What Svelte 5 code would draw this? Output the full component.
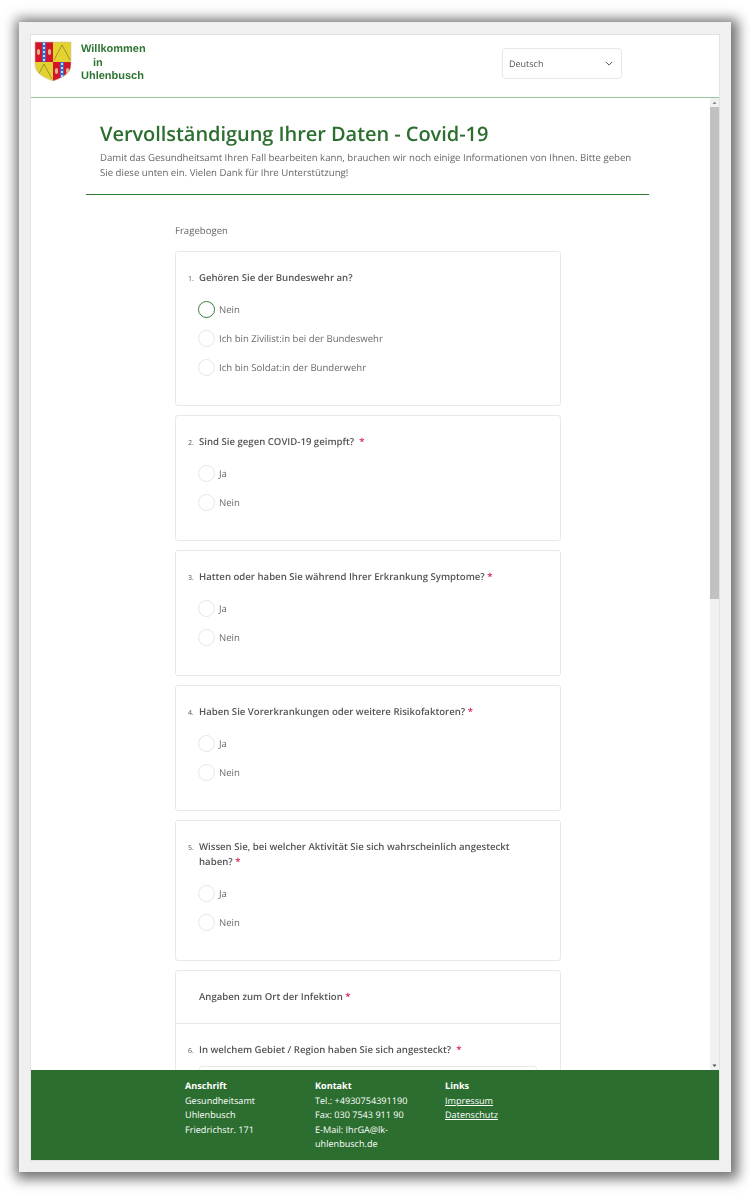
<script>
  const questions = [
    { n: 1, text: "Gehören Sie der Bundeswehr an?", options: ["Nein", "Ich bin Zivilist:in bei der Bundeswehr", "Ich bin Soldat:in der Bunderwehr"], checked: 0 },
    { n: 2, text: "Sind Sie gegen COVID-19 geimpft?", gap: true, options: ["Ja", "Nein"] },
    { n: 3, text: "Hatten oder haben Sie während Ihrer Erkrankung Symptome?", req: true, options: ["Ja", "Nein"] },
    { n: 4, text: "Haben Sie Vorerkrankungen oder weitere Risikofaktoren?", req: true, options: ["Ja", "Nein"] },
    { n: 5, text: "Wissen Sie, bei welcher Aktivität Sie sich wahrscheinlich angesteckt haben?", req: true, options: ["Ja", "Nein"] }
  ];
</script>

<div class="page">
  <div class="frame">
    <div class="window">
      <header class="top">
        <div class="brand">
          <svg class="shield" viewBox="0 0 38 41" width="38" height="41">
            <defs>
              <clipPath id="shape"><path d="M1 1H37V24C37 32 28 37 19 40C10 37 1 32 1 24Z" /></clipPath>
            </defs>
            <g clip-path="url(#shape)">
              <rect width="38" height="41" fill="#e3d22f" />
              <rect x="1" y="1" width="18" height="20" fill="#d3142a" />
              <rect x="19" y="21" width="18" height="20" fill="#d3142a" />
              <rect x="8" y="1" width="4" height="20" fill="#3f66c9" />
              <rect x="26" y="21" width="4" height="20" fill="#3f66c9" />
              <path d="M9 3h2M9 7h2M9 11h2M9 15h2M9 19h2M27 23h2M27 27h2M27 31h2M27 35h2" stroke="#fff" stroke-width="1.6" />
              <ellipse cx="4.5" cy="11" rx="1.6" ry="3" fill="#d9b48e" />
              <ellipse cx="15.5" cy="11" rx="1.6" ry="3" fill="#d9b48e" />
              <ellipse cx="22.5" cy="30" rx="1.6" ry="3" fill="#d9b48e" />
              <ellipse cx="33.5" cy="30" rx="1.6" ry="3" fill="#d9b48e" />
              <path d="M20 19L28 4L36 19M2 38L10 23L18 38" fill="none" stroke="#8d8430" stroke-width="0.8" />
            </g>
            <path d="M1 1H37V24C37 32 28 37 19 40C10 37 1 32 1 24Z" fill="none" stroke="#c9c9b8" stroke-width="0.6" />
          </svg>
          <div class="brand-name">Willkommen<br /><span>in</span><br />Uhlenbusch</div>
        </div>
        <div class="lang">
          <span>Deutsch</span>
          <svg viewBox="0 0 10 6" width="8" height="5"><path d="M1 1L5 5L9 1" fill="none" stroke="#555" stroke-width="1.2" /></svg>
        </div>
      </header>

      <div class="middle">
        <main class="content">
          <div class="intro">
            <h1>Vervollständigung Ihrer Daten - Covid-19</h1>
            <p>Damit das Gesundheitsamt Ihren Fall bearbeiten kann, brauchen wir noch einige Informationen von Ihnen. Bitte geben Sie diese unten ein. Vielen Dank für Ihre Unterstützung!</p>
          </div>
          <div class="form">
            <div class="form-title">Fragebogen</div>
            {#each questions as q}
              <section class="card">
                <div class="question">
                  <span class="num">{q.n}.</span>
                  <span class="q-text">{q.text}{#if q.gap}&nbsp; <b>*</b>{:else if q.req}&nbsp;<b>*</b>{/if}</span>
                </div>
                <div class="options">
                  {#each q.options as opt, i}
                    <div class="option">
                      <span class="radio" class:checked={q.checked === i}></span>
                      <span>{opt}</span>
                    </div>
                  {/each}
                </div>
              </section>
            {/each}
            <section class="card place">
              <div class="place-head">Angaben zum Ort der Infektion <b>*</b></div>
              <div class="place-body">
                <div class="question">
                  <span class="num">6.</span>
                  <span class="q-text">In welchem Gebiet / Region haben Sie sich angesteckt?&nbsp; <b>*</b></span>
                </div>
                <div class="field"></div>
              </div>
            </section>
          </div>
        </main>
        <div class="scrollbar">
          <svg viewBox="0 0 9 9" width="9" height="9"><path d="M2.5 6H6.5L4.5 3.5Z" fill="#8a8a8a" /></svg>
          <div class="track"><div class="thumb"></div></div>
          <svg viewBox="0 0 9 9" width="9" height="9"><path d="M2.5 3.5H6.5L4.5 6Z" fill="#505050" /></svg>
        </div>
      </div>

      <footer class="bottom">
        <div class="col">
          <strong>Anschrift</strong>
          <span>Gesundheitsamt</span>
          <span>Uhlenbusch</span>
          <span>Friedrichstr. 171</span>
        </div>
        <div class="col">
          <strong>Kontakt</strong>
          <span>Tel.: +4930754391190</span>
          <span>Fax: 030 7543 911 90</span>
          <span>E-Mail: IhrGA@lk-uhlenbusch.de</span>
        </div>
        <div class="col">
          <strong>Links</strong>
          <span class="link">Impressum</span>
          <span class="link">Datenschutz</span>
        </div>
      </footer>
    </div>
  </div>
</div>

<style>
  :global(body) {
    background: #fff;
    font-family: "Open Sans", sans-serif;
    text-rendering: geometricPrecision;
  }

  .page {
    box-sizing: border-box;
    height: 1195px;
    padding: 22px 19px 0;
    overflow: hidden;
  }

  .frame {
    box-sizing: border-box;
    width: 712px;
    height: 1150px;
    padding: 13px 12px 12px;
    background: #f0f0f0;
    box-shadow: 2px 2px 12px 5px #707070;
  }

  .window {
    display: flex;
    flex-direction: column;
    height: 100%;
    background: #fff;
    box-shadow: 0 0 0 1px #e2e2e2;
    filter: blur(0.3px);
  }

  /* header */
  .top {
    flex: none;
    display: flex;
    justify-content: space-between;
    height: 62px;
    border-bottom: 1px solid #98c79c;
  }
  .brand {
    display: flex;
    padding: 6px 0 0 3px;
  }
  .brand-name {
    margin-left: 9px;
    padding-top: 2px;
    font-family: "Liberation Sans", sans-serif;
    font-size: 11px;
    font-weight: 700;
    line-height: 13.5px;
    color: #2f7433;
  }
  .brand-name span {
    margin-left: 12px;
  }
  .lang {
    display: flex;
    align-items: center;
    justify-content: space-between;
    box-sizing: border-box;
    width: 120px;
    height: 31px;
    margin: 13px 97px 0 0;
    padding: 0 8px 0 6px;
    border: 1px solid #e8e8e8;
    border-radius: 4px;
    font-size: 9px;
    color: #555;
  }

  /* scrolling area */
  .middle {
    flex: 1;
    min-height: 0;
    display: flex;
    overflow: hidden;
  }
  .content {
    flex: 1;
    min-width: 0;
    overflow: hidden;
  }
  .intro {
    box-sizing: border-box;
    width: 563px;
    height: 97px;
    margin: 0 0 0 55px;
    padding: 22px 14px 0;
    border-bottom: 1.5px solid #2f7d33;
  }
  h1 {
    margin: 0 0 3px;
    font-size: 20px;
    font-weight: 600;
    letter-spacing: -0.05px;
    line-height: 27px;
    color: #2b6e2f;
  }
  .intro p {
    margin: 0;
    font-size: 9.64px;
    line-height: 15px;
    color: #666;
  }

  .form {
    width: 386px;
    margin-left: 144px;
    padding-top: 29px;
    color: #666;
  }
  .form-title {
    margin-bottom: 13px;
    font-size: 9.6px;
    line-height: 14px;
    color: #666;
  }
  .card {
    box-sizing: border-box;
    margin-bottom: 9px;
    padding: 19px 13px 29px 12px;
    border: 1px solid #e8e8e8;
    border-radius: 3px;
  }
  .question {
    display: flex;
    align-items: baseline;
    gap: 5px;
  }
  .num {
    flex: none;
    width: 6px;
    font-size: 7px;
    color: #555;
  }
  .q-text {
    font-size: 9.6px;
    font-weight: 600;
    line-height: 14.5px;
    color: #555;
  }
  b {
    font-weight: 600;
    color: #d81b4a;
  }
  .options {
    display: flex;
    flex-direction: column;
    gap: 12px;
    margin: 15.5px 0 0 10px;
  }
  .option {
    display: flex;
    align-items: center;
    gap: 4px;
    height: 17px;
    font-size: 9.6px;
    color: #6a6a6a;
  }
  .radio {
    box-sizing: border-box;
    flex: none;
    width: 17px;
    height: 17px;
    border: 1px solid #e6e6e6;
    border-radius: 50%;
  }
  .radio.checked {
    border: 1.8px solid #37803c;
  }

  .place {
    margin: 0;
    padding: 0;
    height: 200px;
  }
  .place-head {
    height: 53px;
    padding: 18px 0 0 23px;
    box-sizing: border-box;
    border-bottom: 1px solid #e8e8e8;
    font-size: 9.6px;
    font-weight: 600;
    line-height: 15px;
    color: #555;
  }
  .place-body {
    padding: 19px 23px 0 12px;
  }
  .field {
    height: 34px;
    margin: 9px 0 0 11px;
    border: 1px solid #e8e8e8;
    border-radius: 3px;
  }

  /* fake scrollbar */
  .scrollbar {
    flex: none;
    display: flex;
    flex-direction: column;
    width: 9px;
    background: #f1f1f1;
  }
  .scrollbar svg {
    flex: none;
  }
  .track {
    flex: 1;
  }
  .thumb {
    height: 492px;
    background: #c1c1c1;
  }

  /* footer */
  .bottom {
    flex: none;
    display: flex;
    box-sizing: border-box;
    height: 90px;
    padding: 9px 0 0 154px;
    background: #2b6e2f;
    color: #fff;
    font-size: 9.1px;
    line-height: 14.5px;
  }
  .col {
    display: flex;
    flex-direction: column;
    width: 130px;
    padding-right: 30px;
    box-sizing: border-box;
  }
  .col strong {
    font-weight: 700;
  }
  .link {
    text-decoration: underline;
  }
</style>
